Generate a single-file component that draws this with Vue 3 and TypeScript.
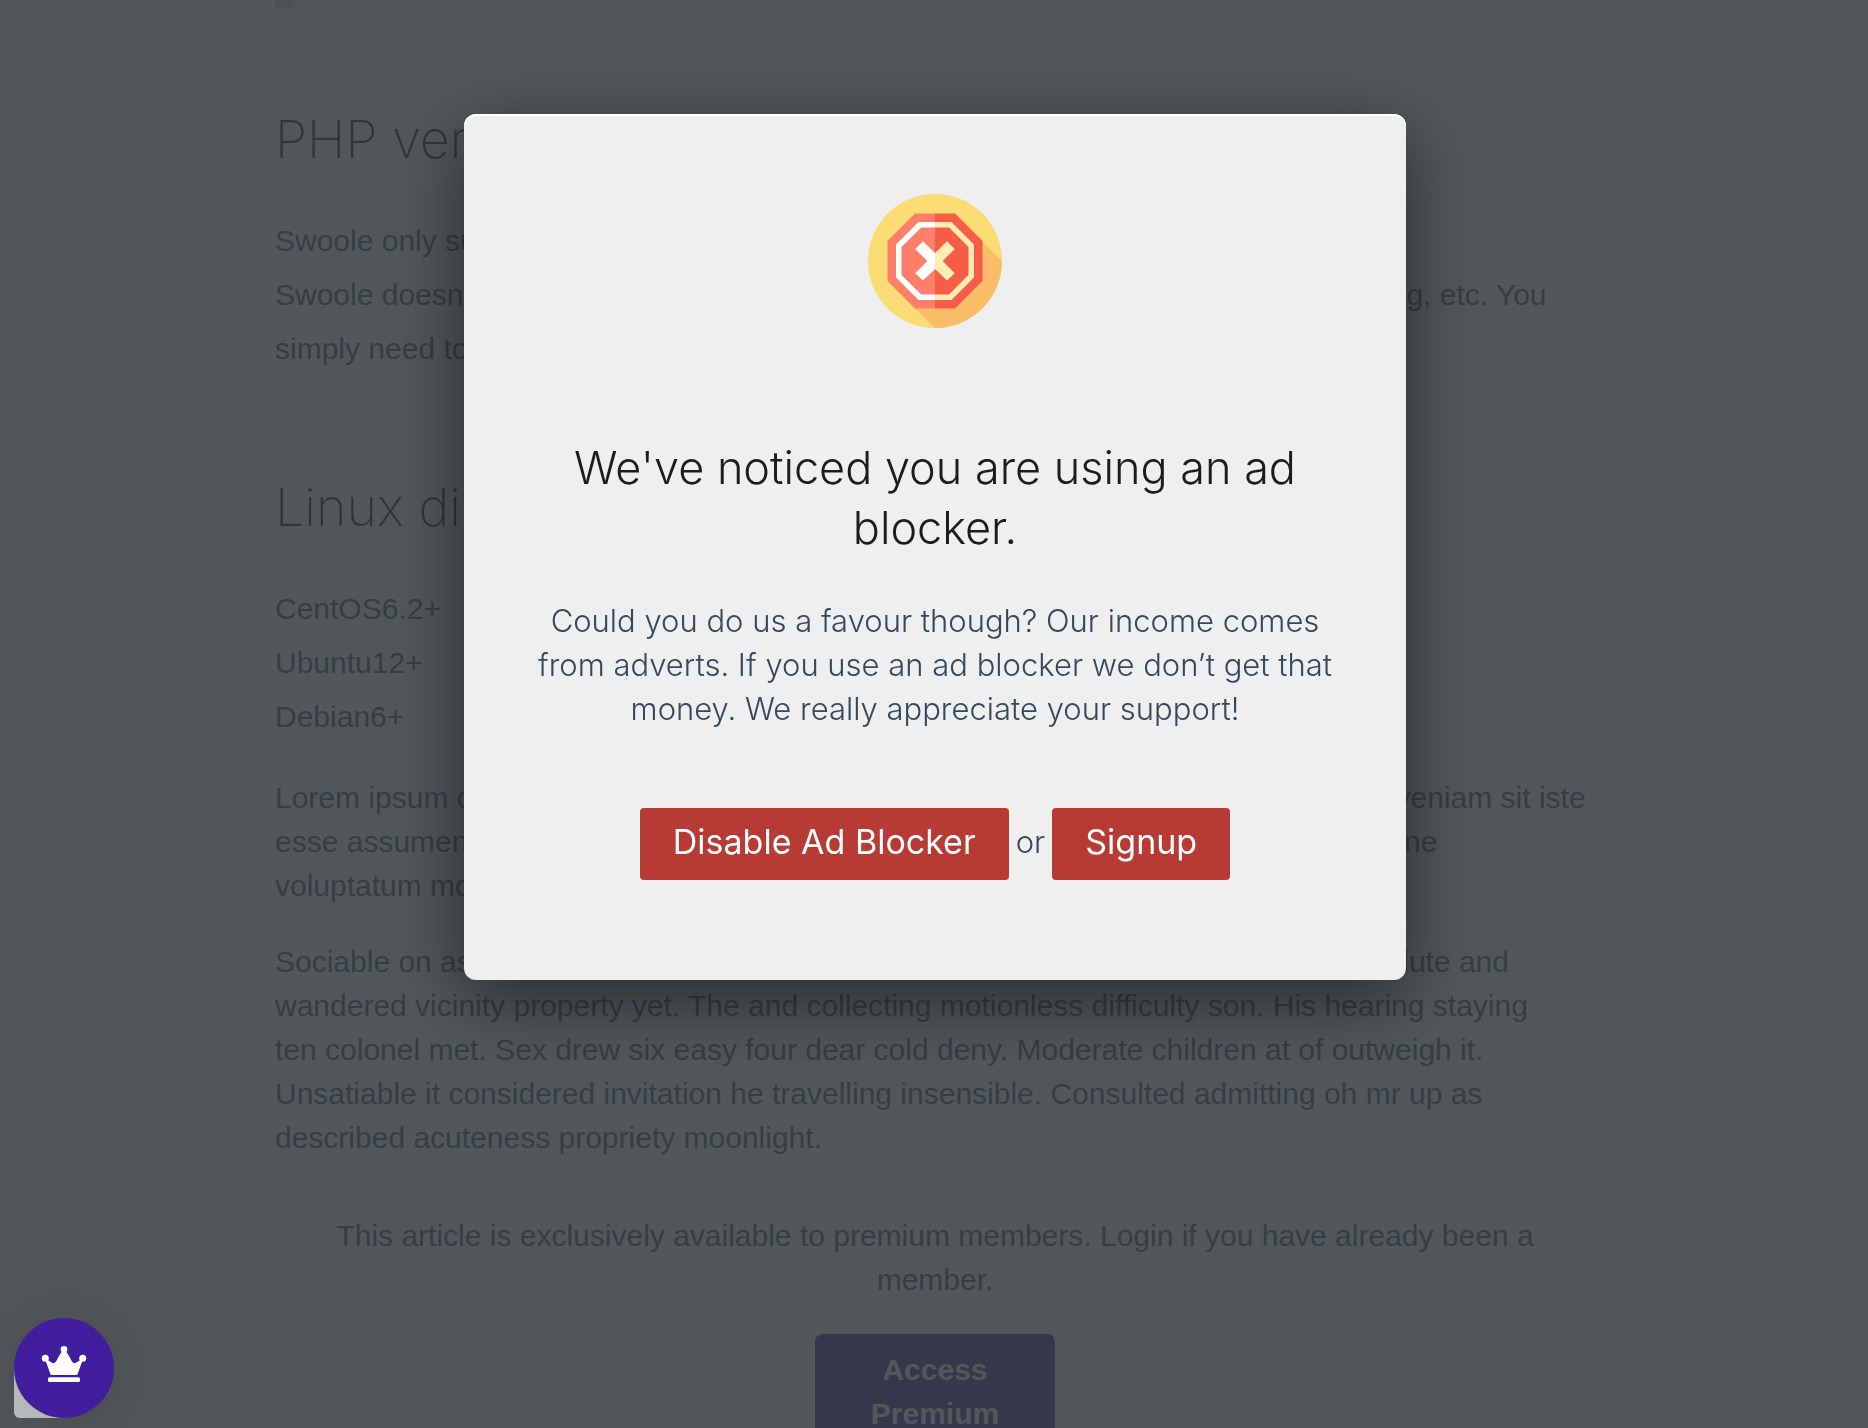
<script setup lang="ts">
const features: string[] = [
  'Swoole only supports PHP 5.5 and above.',
  "Swoole doesn't depend on third party libraries, such as libevent, openssl, pcre, logging, etc. You",
  'simply need to install the extension.',
]

const distributions: string[] = ['CentOS6.2+', 'Ubuntu12+', 'Debian6+']

const lorem: string[] = [
  'Lorem ipsum dolor sit amet, consectetur adipisicing elit. Autem delectus dictas fuga, veniam sit iste',
  'esse assumenda aliqua, deserunt repellat quibusdam laudantium dolore minima ratione',
  'voluptatum molestias quisquam.',
]

const sociable: string[] = [
  'Sociable on as carriage my positions weddings raillery consider. Peculiar trifling absolute and',
  'wandered vicinity property yet. The and collecting motionless difficulty son. His hearing staying',
  'ten colonel met. Sex drew six easy four dear cold deny. Moderate children at of outweigh it.',
  'Unsatiable it considered invitation he travelling insensible. Consulted admitting oh mr up as',
  'described acuteness propriety moonlight.',
]
</script>

<template>
  <div class="page">
    <article class="article">
      <div class="code-end"><span class="code-gutter"></span></div>

      <h2>PHP version</h2>
      <ul class="list">
        <li v-for="line in features" :key="line">{{ line }}</li>
      </ul>

      <h2>Linux distributions</h2>
      <ul class="list">
        <li v-for="name in distributions" :key="name">{{ name }}</li>
      </ul>

      <p class="text">
        <span v-for="line in lorem" :key="line" class="line">{{ line }}</span>
      </p>
      <p class="text">
        <span v-for="line in sociable" :key="line" class="line">{{ line }}</span>
      </p>

      <section class="premium">
        <p>This article is exclusively available to premium members. Login if you have already been a member.</p>
        <button type="button" class="access">Access Premium</button>
      </section>
    </article>

    <div class="overlay">
      <section class="modal" role="dialog" aria-modal="true" aria-labelledby="adblock-title">
        <svg class="stop" viewBox="0 0 134 134" aria-hidden="true">
          <circle cx="67" cy="67" r="67" fill="#fadc74" />
          <path d="M114 47.500L134 67A67 67 0 0 1 67 134L47 114.500Z" fill="#f9bd6a" />
          <path d="M67 19.500H47L19.500 47V87L47 114.500H67Z" fill="#ff7e69" />
          <path d="M67 19.500H87L114.500 47V87L87 114.500H67Z" fill="#f75c46" />
          <path d="M67 28H50.500L28 50.500V83.500L50.500 106H67V100.500H53.300L33.500 81V53L53.300 33.500H67Z" fill="#fff" />
          <path d="M67 28H83.500L106 50.500V83.500L83.500 106H67V100.500H81L100.500 81V53L81 33.500H67Z" fill="#feecb0" />
          <path d="M67 59L55 47.200L47.200 55L59.300 67L47.200 79.200L55 86.500L67 75Z" fill="#fff" />
          <path d="M67 59L79 47.200L86.800 55L74.700 67L86.800 79.200L79 86.500L67 75Z" fill="#feecb0" />
        </svg>
        <h1 id="adblock-title">We've noticed you are using an ad blocker.</h1>
        <p class="message">
          <span class="line">Could you do us a favour though? Our income comes</span>
          <span class="line">from adverts. If you use an ad blocker we don’t get that</span>
          <span class="line">money. We really appreciate your support!</span>
        </p>
        <div class="actions">
          <button type="button" class="action">Disable Ad Blocker</button>
          <span class="or">or</span>
          <button type="button" class="action">Signup</button>
        </div>
      </section>
    </div>

    <div class="badge">
      <button type="button" class="crown" aria-label="Premium">
        <svg viewBox="0 0 100 100" aria-hidden="true">
          <g fill="#fff">
            <circle cx="50" cy="31.300" r="3.300" />
            <circle cx="31.300" cy="40.300" r="3.500" />
            <circle cx="68.700" cy="40.300" r="3.500" />
            <path d="M48.500 32H51.500L58 43.500C59 45.300 61 45.500 62.500 44.500L67 41.500L68.500 42.500L63.200 57H36.800L31.500 42.500L33 41.500L37.500 44.500C39 45.500 41 45.300 42 43.500Z" />
            <rect x="34" y="59.300" width="32" height="4.700" rx="1.500" />
          </g>
        </svg>
      </button>
    </div>
  </div>
</template>

<style>
body {
  margin: 0;
  background: #fff;
}
</style>

<style scoped>
.page {
  box-sizing: border-box;
  height: 100vh;
  padding: 0 20px 0 22px;
  overflow: hidden;
  color: #344980;
  font: 30px/44px "Liberation Sans", Arial, sans-serif;
}

.article {
  max-width: 1320px;
  margin: 0 auto;
}

.code-end {
  display: flex;
  height: 8px;
  background: #f8f8f8;
}

.code-gutter {
  width: 20px;
  background: #d0d0d0;
}

h1,
h2,
p,
ul {
  margin: 0;
}

h2 {
  margin: 102px 0 44px;
  color: #111;
  font: 200 52px/60px Inter, sans-serif;
}

.list {
  padding: 0;
  list-style: none;
  line-height: 54px;
}

.list li,
.line {
  display: block;
  white-space: nowrap;
}

.text {
  margin-top: 32px;
}

.premium {
  margin: 32px 20px 0;
  padding: 20px 20px 40px;
  border: 2px solid #e6e6e6;
  text-align: center;
}

.access {
  width: 240px;
  margin-top: 32px;
  padding: 14px 40px;
  border: 0;
  border-radius: 8px;
  background: #411ea0;
  color: #fff;
  font: inherit;
  font-weight: 700;
}

.overlay {
  position: fixed;
  inset: 0;
  box-sizing: border-box;
  padding: 114px 20px 20px 22px;
  background: rgba(53, 59, 62, 0.86);
}

.modal {
  display: flex;
  flex-direction: column;
  align-items: center;
  box-sizing: border-box;
  max-width: 942px;
  margin: 0 auto;
  padding: 80px 40px 100px;
  border-radius: 12px;
  background: #efefef;
  box-shadow: 0 20px 72px rgba(0, 0, 0, 0.5), inset 0 2px 0 #fff;
  color: #34495e;
  font-family: Inter, sans-serif;
  text-align: center;
}

.stop {
  width: 134px;
  height: 134px;
}

h1 {
  max-width: 800px;
  margin-top: 110px;
  color: #1c1c1c;
  font-size: 45px;
  font-weight: 300;
  line-height: 60px;
}

.message {
  margin-top: 41px;
  font-size: 31px;
  font-weight: 300;
}

.actions {
  display: flex;
  align-items: center;
  gap: 7px;
  margin-top: 77px;
}

.action {
  height: 72px;
  padding: 0 33px 4px;
  border: 0;
  border-radius: 4px;
  background: #b83a34;
  color: #fff;
  font: 400 34px/40px Inter, sans-serif;
}

.or {
  padding-bottom: 4px;
  font-size: 31px;
  font-weight: 300;
}

.badge {
  position: fixed;
  bottom: 10px;
  left: 14px;
  width: 100px;
  height: 100px;
  border-radius: 6px;
  background: linear-gradient(transparent 50%, #c2c2c2 50%) 0 0 / 50% 100% no-repeat;
}

.crown {
  display: block;
  width: 100px;
  height: 100px;
  padding: 0;
  border: 0;
  border-radius: 50%;
  background: #411ea0;
  box-shadow: 0 4px 60px rgba(0, 0, 0, 0.15);
}

.crown svg {
  display: block;
}
</style>
